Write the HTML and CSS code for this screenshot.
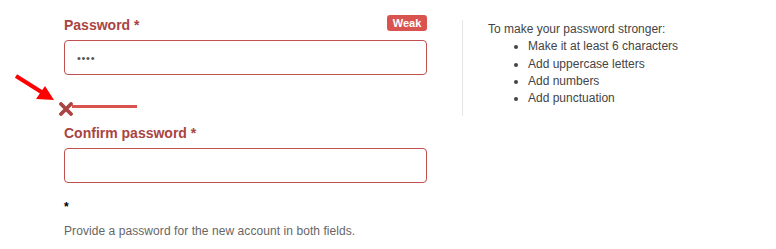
FILE: index.html
```html
<!DOCTYPE html>
<html>
<head>
<meta charset="utf-8">
<link rel="stylesheet" href="styles.css">
</head>
<body>
<div class="page">
  <div class="form-col">
    <div class="label-row">
      <span class="field-label">Password *</span>
      <span class="badge">Weak</span>
    </div>
    <div class="input"><span class="dots">••••</span></div>
    <div class="strength">
      <svg class="x-icon" width="14" height="14" viewBox="0 0 14 14"><path d="M2 2L12 12M12 2L2 12" stroke="#a94442" stroke-width="3.8" stroke-linecap="round"/></svg>
      <div class="bar"></div>
    </div>
    <div class="field-label confirm">Confirm password *</div>
    <div class="input"></div>
    <div class="star">*</div>
    <p class="help">Provide a password for the new account in both fields.</p>
  </div>
  <div class="divider"></div>
  <div class="tips">
    <div>To make your password stronger:</div>
    <ul>
      <li>Make it at least 6 characters</li>
      <li>Add uppercase letters</li>
      <li>Add numbers</li>
      <li>Add punctuation</li>
    </ul>
  </div>
</div>
<svg class="arrow" width="60" height="40" viewBox="0 0 60 40"><path d="M16 6L43 23" stroke="#ff0000" stroke-width="4" stroke-linecap="butt"/><path d="M54 30L36 29L45 16Z" fill="#ff0000"/></svg>
</body>
</html>
```
FILE: styles.css
```css
html, body {
  margin: 0;
  padding: 0;
  background: #fff;
  font-family: "Liberation Sans", Arial, sans-serif;
  font-size: 12px;
  color: #333;
}
.page {
  display: flex;
  align-items: flex-start;
  padding: 15px 0 0 64px;
}
.form-col {
  width: 363px;
  display: flex;
  flex-direction: column;
}
.label-row {
  display: flex;
  justify-content: space-between;
  align-items: flex-start;
  height: 20px;
  margin-bottom: 5px;
}
.field-label {
  font-size: 14px;
  font-weight: bold;
  line-height: 20px;
  color: #a94442;
}
.badge {
  background: #d9534f;
  color: #fff;
  font-weight: bold;
  font-size: 11px;
  line-height: 16px;
  height: 16px;
  width: 40px;
  text-align: center;
  border-radius: 3px;
}
.input {
  box-sizing: border-box;
  height: 35px;
  border: 1px solid #c0504d;
  border-radius: 4px;
  padding: 0 12px;
  display: flex;
  align-items: center;
  background: #fff;
}
.dots {
  font-size: 11px;
  letter-spacing: 0.7px;
  color: #555;
}
.strength {
  display: flex;
  align-items: flex-start;
  margin: 27px 0 0 -5px;
  height: 14px;
}
.x-icon {
  display: block;
}
.bar {
  width: 65px;
  height: 3px;
  margin: 3px 0 0 -1px;
  background: #d9534f;
}
.confirm {
  margin-top: 7px;
  margin-bottom: 5px;
}
.star {
  margin-top: 16px;
  line-height: 17px;
  font-weight: bold;
  color: #000;
}
.help {
  margin: 7px 0 0;
  line-height: 17px;
  letter-spacing: 0.07px;
  color: #666;
}
.divider {
  width: 1px;
  height: 96px;
  margin: 5px 0 0 35px;
  background: #e5e5e5;
}
.tips {
  padding-left: 25px;
  margin-top: 6px;
  line-height: 17.3px;
  color: #444;
}
.tips ul {
  margin: 0;
  padding-left: 40px;
}
.arrow {
  position: absolute;
  left: 0;
  top: 70px;
}
```
